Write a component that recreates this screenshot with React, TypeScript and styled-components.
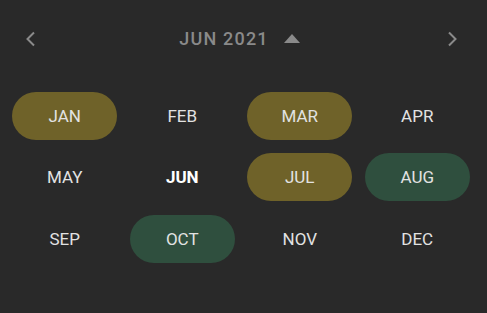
import React from "react"
import styled, { createGlobalStyle } from "styled-components"

const GlobalStyle = createGlobalStyle`
  html, body {
    margin: 0;
    padding: 0;
    background: #292929;
  }
  body {
    font-family: "Roboto", "Liberation Sans", sans-serif;
  }
`

type Tone = "none" | "olive" | "green"

const MONTHS: { label: string; tone: Tone; current?: boolean }[] = [
  { label: "JAN", tone: "olive" },
  { label: "FEB", tone: "none" },
  { label: "MAR", tone: "olive" },
  { label: "APR", tone: "none" },
  { label: "MAY", tone: "none" },
  { label: "JUN", tone: "none", current: true },
  { label: "JUL", tone: "olive" },
  { label: "AUG", tone: "green" },
  { label: "SEP", tone: "none" },
  { label: "OCT", tone: "green" },
  { label: "NOV", tone: "none" },
  { label: "DEC", tone: "none" },
]

const toneColors: Record<Tone, string> = {
  none: "transparent",
  olive: "#6f6229",
  green: "#2f4f3e",
}

const App: React.FC = () => {
  return (
    <>
      <GlobalStyle />
      <Picker>
        <Header>
          <NavButton aria-label="Previous year">
            <svg width="12" height="16" viewBox="0 0 12 16">
              <path d="M9 1.5 L2.5 8 L9 14.5" fill="none" stroke="#8a8a8a" strokeWidth="2" />
            </svg>
          </NavButton>
          <Title>
            <TitleText>JUN 2021</TitleText>
            <svg width="18" height="10" viewBox="0 0 18 10">
              <path d="M1 10 L9 1 L17 10 Z" fill="#8a8a8a" />
            </svg>
          </Title>
          <NavButton aria-label="Next year">
            <svg width="12" height="16" viewBox="0 0 12 16">
              <path d="M3 1.5 L9.5 8 L3 14.5" fill="none" stroke="#8a8a8a" strokeWidth="2" />
            </svg>
          </NavButton>
        </Header>
        <Grid>
          {MONTHS.map((m) => (
            <MonthCell key={m.label}>
              <MonthPill tone={m.tone} current={m.current}>
                {m.label}
              </MonthPill>
            </MonthCell>
          ))}
        </Grid>
      </Picker>
    </>
  )
}

const Picker = styled.div`
  width: 487px;
  height: 313px;
  box-sizing: border-box;
  padding: 0 5px 0 6px;
  background: #292929;
`

const Header = styled.div`
  height: 77px;
  display: flex;
  align-items: center;
  justify-content: space-between;
  padding: 0 18px 0 13px;
`

const NavButton = styled.button`
  width: 24px;
  height: 24px;
  padding: 0;
  border: none;
  background: none;
  display: flex;
  align-items: center;
  justify-content: center;
`

const Title = styled.div`
  display: flex;
  align-items: center;
  gap: 14px;
  margin-right: 3px;
  padding-bottom: 1px;
`

const TitleText = styled.span`
  font-size: 18px;
  font-weight: 500;
  letter-spacing: 1.2px;
  color: #8a8a8a;
`

const Grid = styled.div`
  display: grid;
  grid-template-columns: repeat(4, 117.5px);
  grid-auto-rows: 61.5px;
  padding-top: 8px;
`

const MonthCell = styled.div`
  display: flex;
  align-items: center;
  justify-content: center;
`

const MonthPill = styled.div<{ tone: Tone; current?: boolean }>`
  width: 105px;
  height: 48px;
  border-radius: 24px;
  display: flex;
  align-items: center;
  justify-content: center;
  background: ${({ tone }) => toneColors[tone]};
  color: ${({ current }) => (current ? "#ffffff" : "#e2e2e2")};
  font-size: 17px;
  font-weight: ${({ current }) => (current ? 700 : 400)};
`

export default App
